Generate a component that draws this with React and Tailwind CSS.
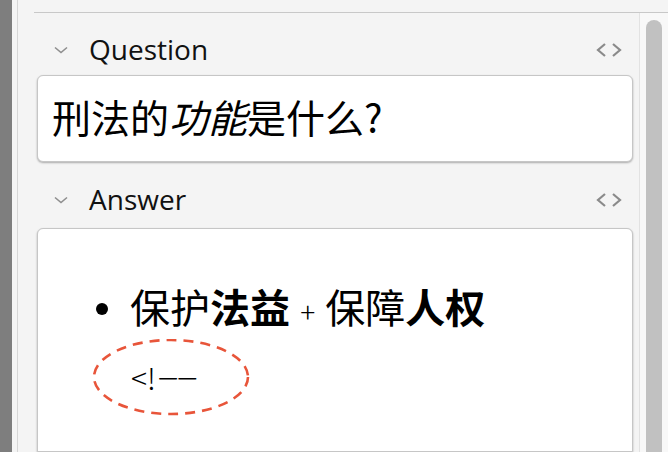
import React from 'react';

const Chevron = () => (
  <svg width="16" height="10" viewBox="0 0 16 10" className="shrink-0">
    <path d="M2 2.5 L8 7.5 L14 2.5" fill="none" stroke="#8e8e8e" strokeWidth="1.6" />
  </svg>
);

const CodeToggle = () => (
  <svg width="30" height="16" viewBox="0 0 30 16" className="shrink-0">
    <path d="M10 2 L3 8 L10 14" fill="none" stroke="#8a8a8a" strokeWidth="2.2" />
    <path d="M18 2 L25 8 L18 14" fill="none" stroke="#8a8a8a" strokeWidth="2.2" />
  </svg>
);

const FieldHeader = ({ label }) => (
  <div className="h-[34px] flex items-center pl-[16px] pr-[8px]">
    <Chevron />
    <span className="ml-[20px] -mt-[3px] text-[28px] text-[#111] font-['Open_Sans',sans-serif] leading-none">{label}</span>
    <div className="flex-1" />
    <CodeToggle />
  </div>
);

export default function App() {
  const cjk = "font-['Noto_Sans_CJK_SC',sans-serif]";
  return (
    <div className="w-[668px] h-[452px] overflow-hidden flex bg-[#f4f4f4]">
      <div className="w-[12px] bg-[#7e7e7e]" />
      <div className="w-[6px] border-r border-[#d6d6d6] bg-[#f4f4f4]" />
      <div className="flex-1 flex flex-col">
        <div className="h-[12px] shrink-0" />
        <div className="ml-[16px] flex-1 flex border-t border-[#c8c8c8] min-h-0">
          <div className="flex-1 pl-[3px] pr-[6px] flex flex-col">
            <div className="mt-[20px]">
              <FieldHeader label="Question" />
            </div>
            <div className={`mt-[8px] bg-white border border-[#c6c6c6] rounded-[6px] shadow-[0_1px_2px_rgba(0,0,0,0.3)] pl-[14px] pt-[14px] pb-[19px] text-[39px] leading-[52px] text-black ${cjk}`}>
              刑法的<i>功能</i>是什么?
            </div>
            <div className="mt-[21px]">
              <FieldHeader label="Answer" />
            </div>
            <div className={`relative mt-[11px] flex-1 bg-white border border-[#c6c6c6] rounded-t-[6px] shadow-[0_1px_2px_rgba(0,0,0,0.3)] pt-[49px] text-black ${cjk}`}>
              <div className="flex items-center pl-[58px]">
                <span className="w-[12px] h-[12px] rounded-full bg-black" />
                <span className="ml-[22px] text-[40px] leading-[56px] whitespace-nowrap">
                  保护<b>法益</b><span className="text-[28px] font-light px-[4px]"> + </span>保障<b>人权</b>
                </span>
              </div>
              <div className="pl-[93px] mt-[20px] text-[30px] leading-[36px] font-light">
                &lt;!<span className="inline-block origin-left scale-x-[2.4] -translate-y-[3px] tracking-[-2px]">--</span>
              </div>
              <svg className="absolute left-[54px] top-[110px]" width="162" height="80" viewBox="0 0 162 80">
                <ellipse cx="79" cy="38" rx="77" ry="37" fill="none" stroke="#e8553a" strokeWidth="2.6" strokeDasharray="10 7" />
              </svg>
            </div>
          </div>
          <div className="w-[29px] border-l border-[#e2e2e2] bg-[#f8f8f8] pl-[6px] pt-[7px]">
            <div className="w-[16px] h-full rounded-t-full bg-[#c1c1c1]" />
          </div>
        </div>
      </div>
    </div>
  );
}
